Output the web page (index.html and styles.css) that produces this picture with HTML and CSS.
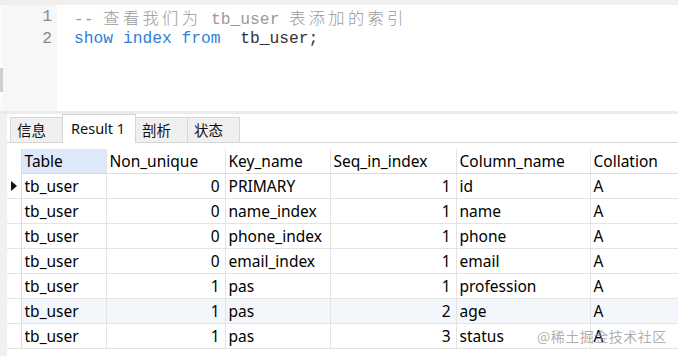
FILE: index.html
```html
<!DOCTYPE html>
<html lang="en">
<head>
    <meta charset="UTF-8">
    <title>tb_user index</title>
    <link rel="stylesheet" href="styles.css">
</head>
<body>
    <div class="window">
        <div class="top-band"></div>
        <div class="editor">
            <div class="gutter">
                <div class="strip"><div class="strip-mark"></div></div>
                <div class="line-numbers">
                    <div>1</div>
                    <div>2</div>
                </div>
            </div>
            <div class="code">
                <div class="code-line comment">-- <span class="cjk">查看我们为</span> tb_user <span class="cjk">表添加的索引</span></div>
                <div class="code-line"><span class="kw">show</span> <span class="kw">index</span> <span class="kw">from</span>  tb_user;</div>
            </div>
        </div>
        <div class="divider"></div>
        <div class="results">
            <div class="side"></div>
            <div class="panel">
                <div class="tabs">
                    <div class="tab">信息</div>
                    <div class="tab active">Result 1</div>
                    <div class="tab">剖析</div>
                    <div class="tab">状态</div>
                </div>
                <table class="grid">
                    <colgroup>
                        <col class="c-ind">
                        <col class="c-table">
                        <col class="c-nonu">
                        <col class="c-key">
                        <col class="c-seq">
                        <col class="c-col">
                        <col class="c-coll">
                    </colgroup>
                    <thead>
                        <tr>
                            <th class="ind"></th>
                            <th class="selected">Table</th>
                            <th>Non_unique</th>
                            <th>Key_name</th>
                            <th>Seq_in_index</th>
                            <th>Column_name</th>
                            <th>Collation</th>
                        </tr>
                    </thead>
                    <tbody>
                        <tr>
                            <td class="ind"><span class="arrow"></span></td>
                            <td>tb_user</td><td class="num">0</td><td>PRIMARY</td><td class="num">1</td><td>id</td><td>A</td>
                        </tr>
                        <tr>
                            <td class="ind"></td>
                            <td>tb_user</td><td class="num">0</td><td>name_index</td><td class="num">1</td><td>name</td><td>A</td>
                        </tr>
                        <tr>
                            <td class="ind"></td>
                            <td>tb_user</td><td class="num">0</td><td>phone_index</td><td class="num">1</td><td>phone</td><td>A</td>
                        </tr>
                        <tr>
                            <td class="ind"></td>
                            <td>tb_user</td><td class="num">0</td><td>email_index</td><td class="num">1</td><td>email</td><td>A</td>
                        </tr>
                        <tr>
                            <td class="ind"></td>
                            <td>tb_user</td><td class="num">1</td><td>pas</td><td class="num">1</td><td>profession</td><td>A</td>
                        </tr>
                        <tr class="alt">
                            <td class="ind"></td>
                            <td>tb_user</td><td class="num">1</td><td>pas</td><td class="num">2</td><td>age</td><td>A</td>
                        </tr>
                        <tr>
                            <td class="ind"></td>
                            <td>tb_user</td><td class="num">1</td><td>pas</td><td class="num">3</td><td>status</td><td>A</td>
                        </tr>
                    </tbody>
                </table>
            </div>
        </div>
        <div class="watermark">@稀土掘金技术社区</div>
    </div>
</body>
</html>
```
FILE: styles.css
```css
:root {
    --band: #efefef;
    --gutter: #f7f7f7;
    --line: #e4e4e4;
    --tab-border: #d6d6d6;
    --mono: "Liberation Mono", "DejaVu Sans Mono", "Noto Sans CJK SC", monospace;
    --sans: "Noto Sans", "Noto Sans CJK SC", sans-serif;
}
body {
    margin: 0;
    background: #fff;
}
.window {
    position: relative;
    width: 678px;
    height: 356px;
    overflow: hidden;
}
.top-band {
    height: 5px;
    background: var(--band);
}

/* editor */
.editor {
    display: flex;
    height: 106px;
    overflow: hidden;
}
.gutter {
    display: flex;
    flex-shrink: 0;
    width: 57px;
    background: var(--gutter);
}
.strip {
    width: 3px;
    background: #fbfbfb;
}
.strip-mark {
    margin-top: 63px;
    height: 24px;
    background: #cfcfcf;
}
.line-numbers {
    flex: 1;
    padding-top: 1px;
    padding-right: 5px;
    text-align: right;
    font-family: var(--mono);
    font-size: 16.3px;
    line-height: 22px;
    color: #888;
}
.code {
    padding: 1px 0 0 17px;
    font-family: var(--mono);
    font-size: 16.3px;
    line-height: 22px;
    color: #333;
}
.code-line {
    white-space: pre;
    height: 22px;
}
.comment {
    color: #9a9a9a;
}
.cjk {
    font-family: "Noto Sans CJK SC", sans-serif;
    font-weight: 300;
    letter-spacing: 3.3px;
}
.kw {
    color: #2f7fd8;
}
.divider {
    height: 3px;
    background: #ebebeb;
}

/* results */
.results {
    display: flex;
    height: 242px;
}
.side {
    flex-shrink: 0;
    width: 7px;
    background: #f1f1f1;
}
.panel {
    flex: 1;
    min-width: 0;
    overflow: hidden;
}
.tabs {
    display: flex;
    align-items: flex-end;
    height: 28px;
    padding-left: 3px;
    border-bottom: 1px solid var(--tab-border);
}
.tab {
    box-sizing: border-box;
    flex-shrink: 0;
    width: 53px;
    height: 25px;
    padding-left: 6px;
    margin-right: -1px;
    background: #f0f0f0;
    border: 1px solid var(--tab-border);
    border-bottom: none;
    font-family: "Noto Sans CJK SC", sans-serif;
    font-size: 14.5px;
    line-height: 23px;
    color: #111;
    white-space: nowrap;
}
.tab.active {
    position: relative;
    z-index: 1;
    width: 74px;
    height: 29px;
    margin-bottom: -1px;
    padding-left: 8px;
    background: #fff;
    font-family: var(--sans);
    line-height: 26px;
}

.grid {
    margin-top: 6px;
    border-collapse: collapse;
    table-layout: fixed;
    width: 740px;
    font-family: var(--sans);
    font-size: 15.5px;
    color: #000;
}
.c-ind { width: 14px; }
.c-table { width: 85px; }
.c-nonu { width: 119px; }
.c-key { width: 105px; }
.c-seq { width: 126px; }
.c-col { width: 134px; }
.c-coll { width: 157px; }
.grid th,
.grid td {
    height: 24px;
    padding: 0 4px 0 3px;
    border-right: 1px solid var(--line);
    border-bottom: 1px solid var(--line);
    text-align: left;
    font-weight: 400;
    white-space: nowrap;
    line-height: 24px;
    overflow: hidden;
}
.grid th {
    border-bottom-color: #dcdcdc;
}
.grid th.ind {
    border-bottom-color: transparent;
}
.grid th.selected {
    background: #dde9f8;
}
.grid td.num {
    text-align: right;
    padding-right: 5px;
}
.grid .ind {
    padding: 0;
    border-right-color: #dcdcdc;
}
.grid tr.alt td {
    background: #f3f7fc;
}
.grid tr.alt td.ind {
    background: #fff;
}
.arrow {
    display: block;
    margin-left: 4px;
    width: 0;
    height: 0;
    border-top: 5px solid transparent;
    border-bottom: 5px solid transparent;
    border-left: 6px solid #111;
}

.watermark {
    position: absolute;
    left: 537px;
    top: 325px;
    font-family: "Noto Sans CJK SC", sans-serif;
    font-size: 14px;
    line-height: 22px;
    color: rgba(140, 140, 140, 0.7);
    letter-spacing: 0.5px;
}
```
